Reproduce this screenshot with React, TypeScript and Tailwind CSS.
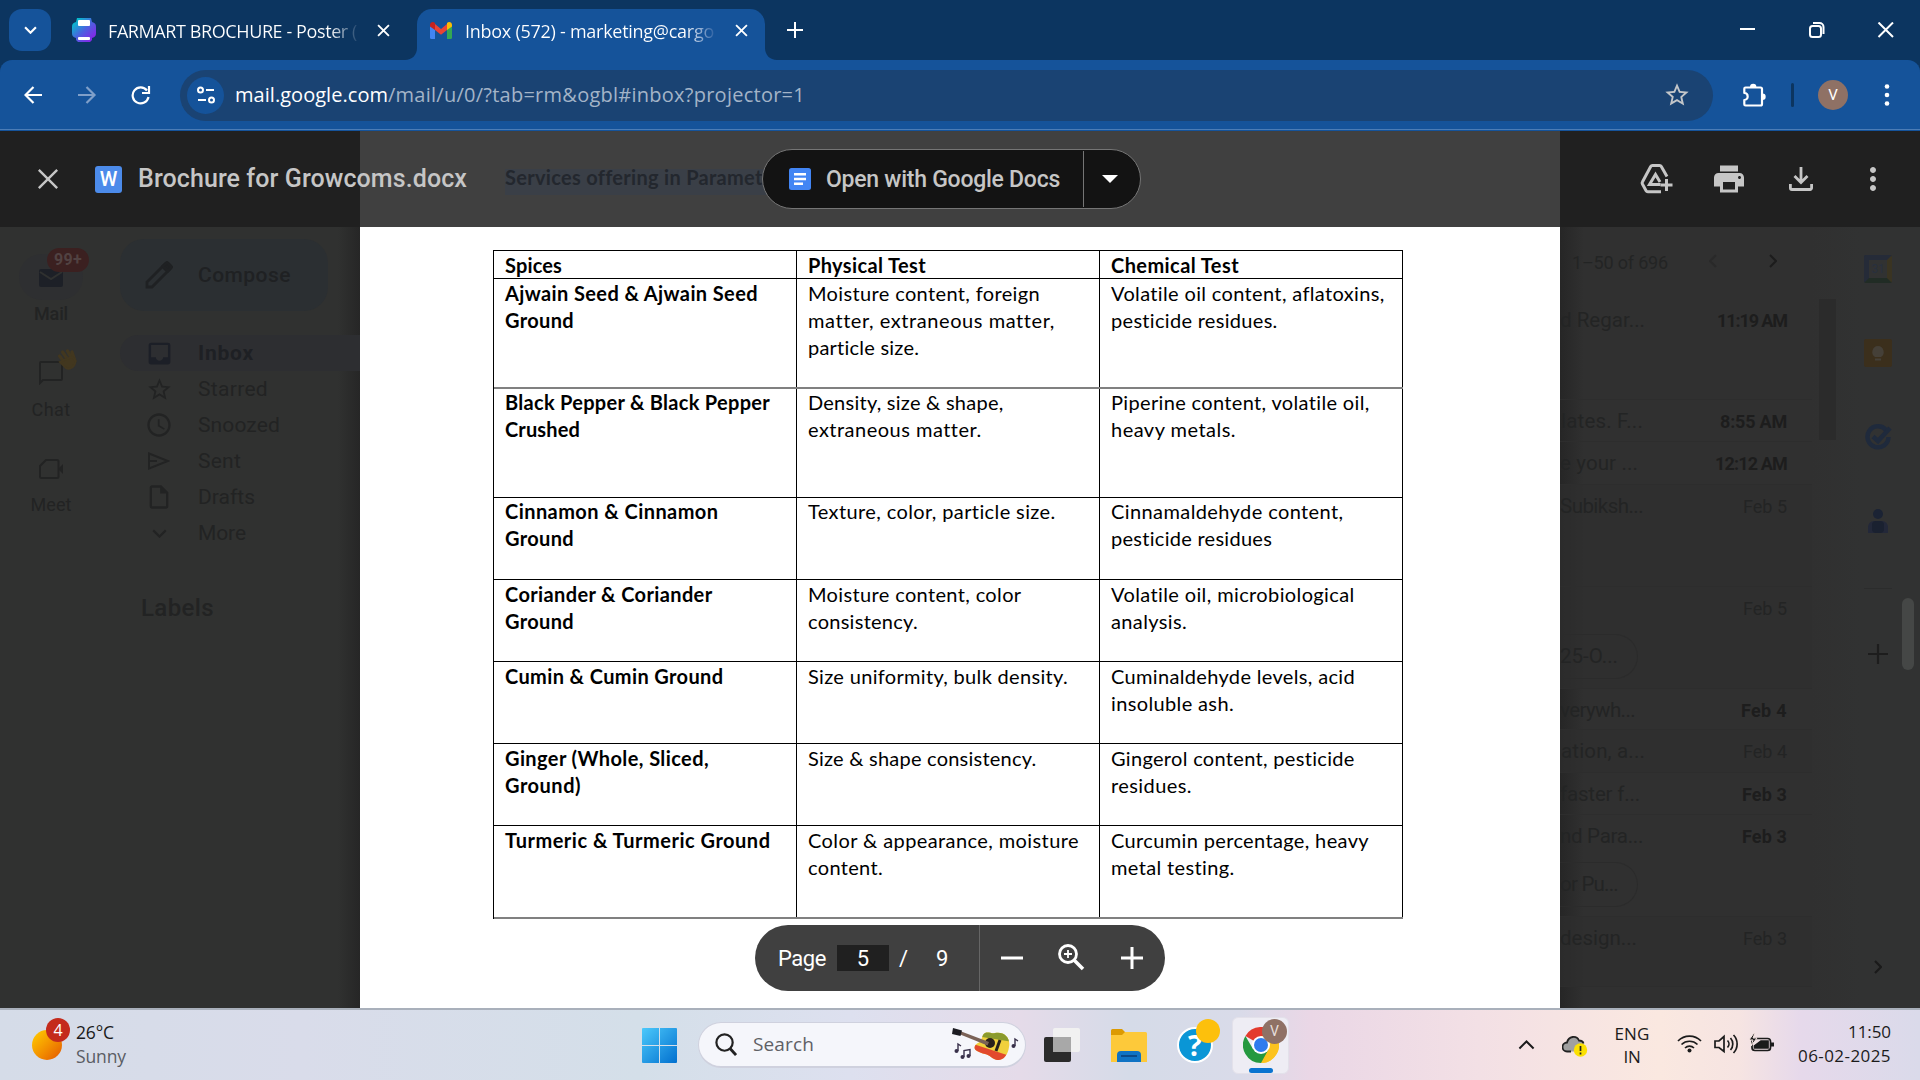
import React, { useLayoutEffect, useRef, useState } from "react";
import {
  MdPrint,
  MdMoreVert,
  MdStarBorder,
  MdInbox,
  MdOutlineInsertDriveFile,
  MdAccessTime,
} from "react-icons/md";

/** One line of text, spaced out or in so that it takes `w` pixels. */
function T({ w, children, className = "" }: { w: number; children: string; className?: string }) {
  const ref = useRef<HTMLSpanElement>(null);
  const [ls, setLs] = useState(0);
  useLayoutEffect(() => {
    const el = ref.current;
    if (el) setLs((w - el.getBoundingClientRect().width) / children.length);
  }, [w, children]);
  return (
    <span ref={ref} className={"inline-block shrink-0 whitespace-pre " + className} style={{ letterSpacing: ls }}>
      {children}
    </span>
  );
}

function Cross({ className }: { className: string }) {
  return (
    <svg viewBox="0 0 12 12" className={className} fill="none" stroke="currentColor">
      <path d="M1 1l10 10M11 1L1 11" />
    </svg>
  );
}

function Chevron({ className, d = "M1 1l5 5 5-5" }: { className: string; d?: string }) {
  return (
    <svg viewBox="0 0 12 7" className={className} fill="none" stroke="currentColor">
      <path d={d} />
    </svg>
  );
}

function TabStrip() {
  return (
    <div className="flex h-[60px] bg-[#0c3560] text-white">
      <div className="ml-[9px] mt-[9px] flex size-[42px] items-center justify-center rounded-[13px] bg-[#15539a]">
        <Chevron className="h-[8px] w-[13px] stroke-[2]" />
      </div>
      <div className="ml-[21px] flex h-[60px] w-[345px] items-center">
        <svg viewBox="0 0 24 24" className="size-6">
          <defs>
            <linearGradient id="pg" x1="0" y1="0.2" x2="0.8" y2="1">
              <stop offset="0" stopColor="#00c4cc" />
              <stop offset="0.5" stopColor="#4b62e0" />
              <stop offset="1" stopColor="#8a22e8" />
            </linearGradient>
          </defs>
          <path d="M5 0h14l1 4c3 1 4 2 4 5v6c0 3-1 4-4 5v2l-2 2H6l-2-2v-2c-3-1-4-2-4-5V9c0-3 1-4 4-5z" fill="url(#pg)" />
          <rect x="6" y="2" width="12" height="6" rx="1" fill="#fff" />
          <rect x="6" y="19" width="12" height="3" rx="1" fill="#fff" />
        </svg>
        <div className="ml-3 mt-[3px] w-[252px] bg-gradient-to-r from-white from-88% to-[#0c3560]/30 bg-clip-text text-[18px] text-transparent">
          <T w={249}>FARMART BROCHURE - Poster (</T>
        </div>
        <Cross className="ml-[17px] size-[13px] stroke-[1.7]" />
      </div>
      <div className="relative mt-[9px] flex w-[348px] items-center rounded-t-[15px] bg-[#15539a] pb-[9px]">
        <svg viewBox="0 0 12 12" className="absolute bottom-0 -left-3 size-3 text-[#15539a]" fill="currentColor">
          <path d="M12 0v12H0C7 12 12 7 12 0z" />
        </svg>
        <svg viewBox="0 0 12 12" className="absolute bottom-0 -right-3 size-3 text-[#15539a]" fill="currentColor">
          <path d="M0 0v12h12C5 12 0 7 0 0z" />
        </svg>
        <svg viewBox="0 0 22 17" className="ml-[13px] h-[17px] w-[22px]">
          <path d="M0 4h5v13H1.500a1.500 1.500 0 0 1-1.500-1.500z" fill="#4285f4" />
          <path d="M17 4h5v11.500a1.500 1.500 0 0 1-1.500 1.500H17z" fill="#34a853" />
          <path d="M5 2l6 5 6-5v6l-6 4.800L5 8z" fill="#ea4335" />
          <path d="M0 3C0 .3 3-.8 5 1v7L0 4.500z" fill="#c5221f" />
          <path d="M22 3c0-2.700-3-3.800-5-2v7l5-3.500z" fill="#fbbc04" />
        </svg>
        <div className="ml-[13px] mt-[3px] w-[252px] bg-gradient-to-r from-white from-88% to-[#15539a] bg-clip-text text-[18px] text-transparent">
          <T w={249}>Inbox (572) - marketing@cargo</T>
        </div>
        <Cross className="ml-[18px] size-[13px] stroke-[1.7]" />
      </div>
      <svg viewBox="0 0 16 16" className="ml-[22px] mt-[22px] size-4 stroke-white stroke-[2]">
        <path d="M8 0v16M0 8h16" />
      </svg>
      <svg viewBox="0 0 154 16" className="mr-[26px] ml-auto mt-[22px] h-4 w-[154px]" fill="none" stroke="white" strokeWidth="2">
        <path d="M0 7h15" />
        <rect x="70" y="4" width="11" height="11" rx="2.500" />
        <path d="M73 1h6.500a4 4 0 0 1 4 4v7" />
        <path d="M138.500.5l14.500 14.500M153 .5L138.500 15" />
      </svg>
    </div>
  );
}

function Toolbar() {
  return (
    <div className="bg-[#0c3560]">
      <div className="flex h-[71px] items-center rounded-t-[12px] border-b border-[#15539a] bg-[#15539a] text-white shadow-[inset_0_-1px_0_#4b7cb6]">
        <svg viewBox="0 0 130 20" className="ml-6 h-5 w-[130px]" fill="none" stroke="currentColor" strokeWidth="2.200">
          <path d="M18 10H2M9.500 2L1.500 10l8 8" />
          <path d="M54 10h16M62.500 2l8 8-8 8" className="text-[#7f9fc9]" stroke="currentColor" />
          <path d="M123 5.500A8 8 0 1 0 124.500 12" />
          <path d="M125 1v7h-7" />
        </svg>
        <div className="ml-[26px] flex h-[51px] w-[1533px] items-center rounded-full bg-[#1a4373]">
          <div className="ml-[7px] flex size-[37px] items-center justify-center rounded-full bg-[#15539a]">
            <svg viewBox="0 0 18 18" className="size-[18px]" fill="none" stroke="white" strokeWidth="2">
              <circle cx="3.500" cy="4" r="2.500" />
              <path d="M9 4h8M1 14h8" />
              <circle cx="14.500" cy="14" r="2.500" />
            </svg>
          </div>
          <div className="ml-[11px] mb-[1px] flex text-[20px]">
            <T w={153}>mail.google.com</T>
            <T w={417} className="text-[#a3b4c8]">/mail/u/0/?tab=rm&ogbl#inbox?projector=1</T>
          </div>
          <MdStarBorder className="mr-[22px] ml-auto size-[28px] text-[#c3c6c9]" />
        </div>
        <svg viewBox="0 0 26 26" className="ml-[28px] size-[26px]" fill="none" stroke="white" strokeWidth="2.200">
          <path d="M4.500 5.500h15a1.500 1.500 0 0 1 1.500 1.500v15a1.500 1.500 0 0 1-1.500 1.500h-15a1.200 1.200 0 0 1-1.200-1.200v-4.300c4.500 0 4.500-7 0-7V6.700a1.200 1.200 0 0 1 1.200-1.200z" strokeLinejoin="round" />
          <path d="M9 5a3.200 3.200 0 0 1 6.400 0M21.500 11.500a3.200 3.200 0 0 1 0 6.400" fill="white" stroke="none" />
        </svg>
        <div className="ml-[24px] h-6 w-[3px] rounded bg-[#0c3560]" />
        <div className="ml-[24px] flex size-[30px] items-center justify-center rounded-full bg-[#8f7165] font-[Roboto] text-[15px]">V</div>
        <svg viewBox="0 0 6 22" className="ml-[36px] h-[22px] w-[6px]" fill="white">
          <circle cx="3" cy="2.500" r="2.300" />
          <circle cx="3" cy="11" r="2.300" />
          <circle cx="3" cy="19.500" r="2.300" />
        </svg>
      </div>
    </div>
  );
}

function ViewerHeader() {
  return (
    <div className="relative flex h-24 items-center bg-[linear-gradient(90deg,#202020_360px,#404040_360px,#404040_1560px,#202020_1560px)] font-[Roboto] text-[#c6c6c6]">
      <div className="absolute top-[38px] left-[505px] h-[26px] w-[270px] bg-[#3a3f47] font-[Lato] text-[20px] leading-[17px] font-bold text-[#23272e]">
        <T w={257}>Services offering in Paramet</T>
      </div>
      <Cross className="ml-[37px] size-[22px] stroke-[1.300]" />
      <div className="ml-[36px] flex size-[27px] items-center justify-center rounded-[3px] bg-[#4c8bea] font-[Roboto] text-[20px] font-medium text-white">W</div>
      <div className="ml-4 text-[25px] font-medium">
        <T w={329}>Brochure for Growcoms.docx</T>
      </div>
      <div className="relative ml-[295px] flex h-[60px] w-[379px] items-center rounded-full border border-[#757575] bg-[#131313]">
        <svg viewBox="0 0 22 22" className="ml-[26px] size-[22px]">
          <rect width="22" height="22" rx="2.500" fill="#4285f4" />
          <path d="M5 6.200h12M5 11h12M5 15.700h9" stroke="white" strokeWidth="2.400" />
        </svg>
        <div className="mt-[2px] ml-[15px] text-[23px] font-medium">
          <T w={234}>Open with Google Docs</T>
        </div>
        <div className="ml-[23px] h-[56px] w-px bg-[#757575]" />
        <svg viewBox="0 0 16 8" className="ml-[18px] h-2 w-4" fill="white">
          <path d="M0 0h16L8 8z" />
        </svg>
      </div>
      <svg viewBox="0 0 34 30" className="ml-[499px] h-[30px] w-[34px]" fill="none" stroke="currentColor" strokeWidth="3">
        <path d="M27 12.500L21.300 2.500a2 2 0 0 0-1.700-1H12.400a2 2 0 0 0-1.700 1L2.400 18a2 2 0 0 0 0 2l3.700 6.700a2 2 0 0 0 1.700 1H21" />
        <path d="M20.500 20.500H9.500L15.500 10.500l4.500 7.500" />
        <path d="M26.500 15v12M20.500 21h12" />
      </svg>
      <MdPrint className="ml-[37px] size-[36px]" />
      <svg viewBox="0 0 24 24" className="ml-[42px] size-[24px]" fill="none" stroke="currentColor" strokeWidth="2.800">
        <path d="M12 0v15M5.500 9l6.500 6.500L18.500 9M1.400 17v4a1.500 1.500 0 0 0 1.500 1.500h18.200a1.500 1.500 0 0 0 1.500-1.500v-4" />
      </svg>
      <MdMoreVert className="ml-[42px] size-[36px]" />
    </div>
  );
}

const NAV: [string, number, React.ReactNode][] = [
  ["Inbox", 56, <MdInbox className="size-[29px] text-[#1c1f27]" />],
  ["Starred", 70, <MdStarBorder className="size-[27px]" />],
  ["Snoozed", 82, <MdAccessTime className="size-[28px]" />],
  [
    "Sent",
    43,
    <svg viewBox="0 0 22 18" className="h-[18px] w-[22px]" fill="none" stroke="currentColor" strokeWidth="2">
      <path d="M1 1.500L20 9 1 16.500zM1 9h8" />
    </svg>,
  ],
  ["Drafts", 57, <MdOutlineInsertDriveFile className="size-[28px]" />],
  ["More", 48, <Chevron className="h-[9px] w-[15px] stroke-[1.700]" />],
];

function LeftPane() {
  return (
    <div className="flex w-[360px] bg-[linear-gradient(90deg,#303130_338px,#262626_360px)] font-[Roboto] text-[#222323]">
      <div className="flex w-[102px] flex-col items-center text-[18px]">
        <div className="relative mt-[27px] flex h-[46px] w-[64px] items-center justify-center rounded-full bg-[#2e2f31]">
          <svg viewBox="0 0 24 18" className="mt-[2px] h-[18px] w-6" fill="#1d2027">
            <rect width="24" height="18" rx="2" />
            <path d="M1 3l11 7L23 3" stroke="#303130" strokeWidth="2" fill="none" />
          </svg>
          <div className="absolute -top-[6px] left-[28px] flex h-6 w-[42px] items-center justify-center rounded-full bg-[#3b2020] text-[16px] font-bold text-[#514242]">
            <T w={28}>99+</T>
          </div>
        </div>
        <T w={34} className="font-medium">Mail</T>
        <div className="relative mt-[31px] h-[28px] w-6">
          <svg viewBox="0 0 24 24" className="mt-[3px] size-6" fill="none" stroke="currentColor" strokeWidth="2">
            <path d="M1 22V2a1 1 0 0 1 1-1h20a1 1 0 0 1 1 1v16a1 1 0 0 1-1 1H4z" />
          </svg>
          <svg viewBox="0 0 22 24" className="absolute -top-[10px] left-[18px] h-6 w-[22px]" fill="none" stroke="#42371f" strokeWidth="3.200" strokeLinecap="round">
            <path d="M2.500 8l7 9M5.500 4l7 10M10.500 3l5 9M15 4l3 9" />
            <path d="M3 14l6 6c4 2 9-1 9.500-7L15 9 7 12z" fill="#42371f" strokeWidth="2" />
          </svg>
        </div>
        <T w={39} className="mt-[10px]">Chat</T>
        <svg viewBox="0 0 24 20" className="mt-[36px] h-5 w-6" fill="none" stroke="currentColor" strokeWidth="2">
          <path d="M7 1h11a1.500 1.500 0 0 1 1.500 1.500v15a1.500 1.500 0 0 1-1.500 1.500H2.500A1.500 1.500 0 0 1 1 17.500V7z" />
          <path d="M19 10l5-5v10z" fill="currentColor" stroke="none" />
        </svg>
        <T w={41} className="mt-[12px]">Meet</T>
      </div>
      <div className="flex w-[258px] flex-col pl-[18px]">
        <div className="mt-3 flex h-[72px] w-[208px] items-center rounded-[24px] bg-[#2b2f32] text-[#1f2123]">
          <svg viewBox="0 0 28 28" className="ml-[25px] size-7" fill="none" stroke="currentColor" strokeWidth="2.800">
            <path d="M2 26v-5L20.500 2.500c.8-.8 2-.8 2.800 0l2.200 2.200c.8.800.8 2 0 2.800L7 26zM17.500 5.500l5 5" />
            <path d="M18 5l4-3.500 4.500 4.500L23 10z" fill="currentColor" />
          </svg>
          <T w={93} className="mt-[2px] ml-[25px] text-[21px] font-medium">Compose</T>
        </div>
        <div className="mt-6 text-[21px]">
          {NAV.map(([label, w, icon], i) => (
            <div key={label} className={"flex h-9 items-center " + (i === 0 ? "rounded-l-full bg-[#2d2e31] font-bold text-[#1e2024]" : "")}>
              <div className="ml-[22px] flex w-[34px] justify-center">{icon}</div>
              <T w={w} className="mt-[2px] ml-[22px]">{label}</T>
            </div>
          ))}
        </div>
        <T w={73} className="mt-[39px] ml-[21px] self-start text-[24px] font-medium">Labels</T>
      </div>
    </div>
  );
}

type Mail = { h: number; text: string; tw: number; end: number; date: string; dw: number; bold?: boolean; pill?: string; pw?: number };

const MAILS: Mail[] = [
  { h: 101, text: "d Regar...", tw: 85, end: 1645, date: "11:19 AM", dw: 70, bold: true },
  { h: 42, text: "lates. F...", tw: 82, end: 1643, date: "8:55 AM", dw: 67, bold: true },
  { h: 43, text: "e your ...", tw: 78, end: 1638, date: "12:12 AM", dw: 72, bold: true },
  { h: 102, text: "Subiksh...", tw: 83, end: 1643, date: "Feb 5", dw: 44 },
  { h: 102, text: "", tw: 0, end: 1640, date: "Feb 5", dw: 44, pill: "25-O...", pw: 58 },
  { h: 41, text: "verywh...", tw: 75, end: 1635, date: "Feb 4", dw: 46, bold: true },
  { h: 43, text: "ation, a...", tw: 84, end: 1645, date: "Feb 4", dw: 44 },
  { h: 42, text: "faster f...", tw: 80, end: 1640, date: "Feb 3", dw: 45, bold: true },
  { h: 102, text: "nd Para...", tw: 83, end: 1643, date: "Feb 3", dw: 45, bold: true, pill: "or Pu...", pw: 58 },
  { h: 70, text: "design...", tw: 77, end: 1637, date: "Feb 3", dw: 44 },
];

function RightPane() {
  return (
    <div className="flex w-[360px] bg-[linear-gradient(90deg,#262626_0px,#303030_24px,#303030_250px,#313232_300px)] font-[Roboto] text-[#232424]">
      <div className="w-[252px]">
        <div className="flex h-[72px] items-center pb-[1px]">
          <T w={96} className="ml-3 text-[18px]">1–50 of 696</T>
          <svg viewBox="0 0 8 14" className="mt-[-3px] ml-[41px] h-[14px] w-2" fill="none" stroke="#292929" strokeWidth="2">
            <path d="M7 1L1 7l6 6" />
          </svg>
          <svg viewBox="0 0 8 14" className="mt-[-3px] ml-[52px] h-[14px] w-2" fill="none" stroke="#1c1c1c" strokeWidth="2">
            <path d="M1 1l6 6-6 6" />
          </svg>
        </div>
        {MAILS.map((m, i) => (
          <div key={i} className={"border-b border-[#2d2d2d] " + (m.bold ? "" : "bg-[#2f2f2f]/60")} style={{ height: m.h }}>
            <div className="flex h-[42px] items-center justify-between pr-[25px]">
              <div className="flex justify-end text-[20.500px]" style={{ width: m.end - 1560 }}>
                {m.text && <T w={m.tw}>{m.text}</T>}
              </div>
              <T w={m.dw} className={"text-[18px] " + (m.bold ? "font-bold text-[#1d1d1d]" : "")}>{m.date}</T>
            </div>
            {m.pill && (
              <div className="mt-[5px] flex h-[45px] w-[78px] items-center justify-end rounded-r-full border border-l-0 border-[#2b2b2b] pr-[19px] text-[20.500px]">
                <T w={m.pw || 58}>{m.pill}</T>
              </div>
            )}
          </div>
        ))}
      </div>
      <div className="mt-[72px] ml-[7px] h-[141px] w-[17px] bg-[#2b2b2b]" />
      <div className="ml-[27px] flex w-[30px] flex-col items-center">
        <div className="mt-[28px] flex size-7 items-center justify-center rounded-[2px] border-[5px] border-t-[#252b38] border-r-[#3a3422] border-b-[#212c25] border-l-[#252b38] text-[12px] leading-none text-[#28303e]">
          <T w={13}>31</T>
        </div>
        <svg viewBox="0 0 28 28" className="mt-14 size-7">
          <rect width="28" height="28" rx="2" fill="#3b2f1c" />
          <path d="M14 7a6 6 0 0 0-3 11h6a6 6 0 0 0-3-11zM11 19.500h6v2h-6z" fill="#454038" />
        </svg>
        <svg viewBox="0 0 28 28" className="mt-14 size-7" fill="none" stroke="#1f2a3c" strokeWidth="4.500">
          <path d="M22 7a10.500 10.500 0 1 0 2.500 7" />
          <path d="M9 13.500l5 4.500L26 5" />
        </svg>
        <svg viewBox="0 0 28 28" className="mt-14 size-7">
          <circle cx="14" cy="7" r="5" fill="#1b2334" />
          <path d="M4 26v-6a6 6 0 0 1 6-6h8a6 6 0 0 1 6 6v6z" fill="#232839" />
          <rect x="8" y="14" width="12" height="12" rx="4" fill="#1a2130" />
        </svg>
        <div className="mt-[53px] h-px w-7 bg-[#2b2c2c]" />
        <svg viewBox="0 0 20 20" className="mt-[55px] size-5 stroke-[#1d1d1d] stroke-[2.200]">
          <path d="M10 0v20M0 10h20" />
        </svg>
        <svg viewBox="0 0 8 14" className="mt-[296px] h-[14px] w-2" fill="none" stroke="#1a1a1a" strokeWidth="2.200">
          <path d="M1 1l6 6-6 6" />
        </svg>
      </div>
      <div className="mt-[371px] ml-[9px] h-[72px] w-3 rounded-full bg-[#454746]" />
    </div>
  );
}

type Cell = [string, number][];
type Row = { cls: string; cells: [Cell, Cell, Cell]; head?: boolean };

const ROWS: Row[] = [
  { cls: "h-[28px] border-b border-black", head: true, cells: [[["Spices", 57]], [["Physical Test", 118]], [["Chemical Test", 128]]] },
  {
    cls: "h-[110px] border-b-2 border-b-[#808080]",
    cells: [
      [["Ajwain Seed & Ajwain Seed", 253], ["Ground", 69]],
      [["Moisture content, foreign", 232], ["matter, extraneous matter,", 245.5], ["particle size.", 111.5]],
      [["Volatile oil content, aflatoxins,", 274], ["pesticide residues.", 167]],
    ],
  },
  {
    cls: "h-[109px] border-b border-black",
    cells: [
      [["Black Pepper & Black Pepper", 265], ["Crushed", 75]],
      [["Density, size & shape,", 195.5], ["extraneous matter.", 173]],
      [["Piperine content, volatile oil,", 259], ["heavy metals.", 125]],
    ],
  },
  {
    cls: "h-[82px] border-b border-black",
    cells: [
      [["Cinnamon & Cinnamon", 213.5], ["Ground", 69]],
      [["Texture, color, particle size.", 248]],
      [["Cinnamaldehyde content,", 232.5], ["pesticide residues", 161.5]],
    ],
  },
  {
    cls: "h-[82px] border-b border-black",
    cells: [
      [["Coriander & Coriander", 207.5], ["Ground", 69]],
      [["Moisture content, color", 213.5], ["consistency.", 110]],
      [["Volatile oil, microbiological", 244], ["analysis.", 76]],
    ],
  },
  {
    cls: "h-[82px] border-b border-black",
    cells: [
      [["Cumin & Cumin Ground", 218.5]],
      [["Size uniformity, bulk density.", 260]],
      [["Cuminaldehyde levels, acid", 244], ["insoluble ash.", 123]],
    ],
  },
  {
    cls: "h-[82px] border-b border-black",
    cells: [
      [["Ginger (Whole, Sliced,", 204], ["Ground)", 76]],
      [["Size & shape consistency.", 228.5]],
      [["Gingerol content, pesticide", 244], ["residues.", 81]],
    ],
  },
  {
    cls: "h-[93px] border-b-2 border-b-[#808080]",
    cells: [
      [["Turmeric & Turmeric Ground", 265.5]],
      [["Color & appearance, moisture", 271], ["content.", 75]],
      [["Curcumin percentage, heavy", 258], ["metal testing.", 124]],
    ],
  },
];

function DocPage() {
  return (
    <div className="relative w-[1200px] bg-white font-[Lato] text-[20px] leading-[27px] text-black">
      <div className="mt-[23px] ml-[133px] w-[910px] border-t border-l border-black">
        {ROWS.map((r, i) => (
          <div key={i} className={"grid grid-cols-[303px_303px_303px] " + r.cls}>
            {r.cells.map((c, j) => (
              <div
                key={j}
                className={
                  "flex flex-col items-start border-r border-black pl-[11px]" +
                  (i === 2 || i === 3 ? "" : " pt-px") +
                  (r.head || j === 0 ? " font-bold" : "")
                }
              >
                {c.map(([t, w]) => (
                  <T key={t} w={w}>{t}</T>
                ))}
              </div>
            ))}
          </div>
        ))}
      </div>
      <div className="absolute top-[698px] left-[395px] flex h-[66px] w-[410px] items-center rounded-full bg-[#404040] font-[Roboto] text-[22px] text-white">
        <T w={48} className="ml-[23px]">Page</T>
        <div className="ml-[11px] flex h-[26px] w-[52px] items-center justify-center bg-[#202020]">5</div>
        <div className="ml-[10px]">/</div>
        <div className="ml-[28px]">9</div>
        <div className="ml-auto h-full w-px bg-[#666]" />
        <svg viewBox="0 0 144 28" className="mr-[20px] ml-[21px] h-7 w-[144px]" fill="none" stroke="white" strokeWidth="3">
          <path d="M0 14h22M120 14h22M131 3v22" />
          <circle cx="67" cy="10" r="8.500" strokeWidth="2.800" />
          <path d="M73 16l9 9" strokeWidth="3.600" />
          <path d="M67 6v8M63 10h8" strokeWidth="1.800" />
        </svg>
      </div>
    </div>
  );
}

function Guitar() {
  return (
    <svg viewBox="0 0 68 36" className="mt-[2px] h-9 w-[68px]">
      <defs>
        <clipPath id="gb">
          <path d="M31 7c3-5 8-1 12-2 9-2 16 5 14 14-1 8-6 14-12 13-5-1-7-5-12-6-7-2-12-4-10-8 1-3 5-3 6-6z" />
        </clipPath>
      </defs>
      <g clipPath="url(#gb)">
        <path d="M20 0h45v36H20z" fill="#f0d03c" />
        <path d="M28 0h40v15L30 9z" fill="#8a9a2e" />
        <path d="M18 15l37 12-6 9H18z" fill="#e2492d" />
        <path d="M48 12l-4 11" stroke="#26201c" strokeWidth="3" />
      </g>
      <circle cx="38" cy="15" r="5" fill="#2a221c" />
      <path d="M8 3l29 11-1.500 3.500L7 6z" fill="#7a6257" />
      <path d="M1 0l9 2.500L8.500 8 0 6z" fill="#1c1c22" />
      <path d="M6 23v-7l3 2M12 29v-6.500l6-1V28" stroke="#38304a" strokeWidth="1.400" fill="none" />
      <path d="M63 18v-7l3 2" stroke="#38304a" strokeWidth="1.400" fill="none" />
      <g fill="#38304a">
        <circle cx="4.500" cy="23" r="2" />
        <circle cx="10.500" cy="29" r="2" />
        <circle cx="16.500" cy="28" r="2" />
        <circle cx="61.500" cy="18" r="2" />
      </g>
    </svg>
  );
}

function Taskbar() {
  return (
    <div className="flex h-[72px] items-center border-t-2 border-[#a9b0bb] bg-[linear-gradient(90deg,#d5dce8_0px,#d9dcea_300px,#d4dfe9_640px,#dde0ef_850px,#e5dbe9_1020px,#d5dbe8_1130px,#d9dbe9_1240px,#ead7e6_1310px,#f3e0e5_1480px,#fae8e0_1660px,#f6e4e2_1740px,#e6d9eb_1800px,#dadaea_1920px)] text-[#1b1b1b]">
      <div className="relative ml-8 size-[30px] rounded-full bg-gradient-to-br from-[#ffd000] to-[#e25400]">
        <div className="absolute -top-[12px] left-[14px] flex size-6 items-center justify-center rounded-full bg-[#c42b1c] text-[16px] text-white">4</div>
      </div>
      <div className="mb-[2px] ml-[14px] flex w-[52px] flex-col items-start text-[17.500px] leading-6">
        <T w={38}>26°C</T>
        <T w={50} className="text-[#5a5d63]">Sunny</T>
      </div>
      <svg viewBox="0 0 35 35" className="ml-[514px] size-[35px]">
        <defs>
          <linearGradient id="wl" x1="0" y1="0" x2="1" y2="1">
            <stop offset="0" stopColor="#4cc9fb" />
            <stop offset="1" stopColor="#0270cf" />
          </linearGradient>
        </defs>
        <path d="M1 0h16v17H0V1a1 1 0 0 1 1-1zM18 0h16a1 1 0 0 1 1 1v16H18zM0 18h17v17H1a1 1 0 0 1-1-1zM18 18h17v16a1 1 0 0 1-1 1H18z" fill="url(#wl)" />
      </svg>
      <div className="ml-[21px] flex h-[46px] w-[328px] items-center rounded-full border border-b-2 border-[#cfd1de] bg-[#f5f6fb]">
        <svg viewBox="0 0 24 24" className="ml-[15px] size-[23px]" fill="none" stroke="#222" strokeWidth="2.300">
          <circle cx="11" cy="10" r="8.500" />
          <path d="M16.500 16l6.500 7" strokeWidth="3" />
        </svg>
        <T w={61} className="ml-[16px] text-[19px] text-[#5f6065]">Search</T>
        <div className="ml-auto pr-[5px]">
          <Guitar />
        </div>
      </div>
      <svg viewBox="0 0 36 34" className="ml-[18px] h-[34px] w-9">
        <rect y="9" width="27" height="25" rx="2" fill="#2b2b2b" />
        <rect x="9" width="27" height="24" rx="2" fill="#f1f1f1" />
        <path d="M9 9h18v15H9z" fill="#a8a8a8" />
      </svg>
      <svg viewBox="0 0 36 33" className="ml-[31px] h-[33px] w-9">
        <path d="M0 1.500A1.500 1.500 0 0 1 1.500 0H11l4 4-3 4H0z" fill="#dc9a02" />
        <path d="M0 6h11l3-3h20.500A1.500 1.500 0 0 1 36 4.500V33H0z" fill="#fdc93a" />
        <path d="M6 33v-7a4 4 0 0 1 4-4h16a4 4 0 0 1 4 4v7z" fill="#0f73c4" />
        <path d="M10 27h16" stroke="#0a4a8a" strokeWidth="2" />
      </svg>
      <div className="relative ml-[30px] flex size-[36px] items-center justify-center rounded-full border-2 border-white bg-[#0a96d6] text-[29px] font-bold text-white">
        ?
        <div className="absolute -top-[10px] left-[17px] size-6 rounded-full bg-[#fdc00c]" />
      </div>
      <div className="relative ml-[19px] flex size-[57px] items-center justify-center rounded-[6px] border border-[#e3e1ea] bg-[#eeedf4]">
        <svg viewBox="0 0 36 36" className="size-9">
          <path d="M18 18L2.400 9a18 18 0 0 1 31.200 0z" fill="#e33b2e" />
          <path d="M18 18l15.600-9A18 18 0 0 1 18 36z" fill="#fcc31e" />
          <path d="M2.400 9A18 18 0 0 0 18 36l7.500-13.500L10 22z" fill="#25993f" />
          <path d="M18 9h15.600a18 18 0 0 1-14.400 27L26 22z" fill="#fcc31e" />
          <circle cx="18" cy="18" r="9" fill="white" />
          <circle cx="18" cy="18" r="7" fill="#2f7bee" />
        </svg>
        <div className="absolute top-[1px] left-[29px] flex size-[25px] items-center justify-center rounded-full bg-[#8f7165] font-[Roboto] text-[14px] text-[#e6dedb]">V</div>
        <div className="absolute bottom-0 h-[5px] w-6 rounded-full bg-[#0a74d0]" />
      </div>
      <Chevron d="M1 6l5-5 5 5" className="ml-[229px] h-[10px] w-[17px] stroke-[1.400]" />
      <svg viewBox="0 0 26 22" className="mt-[2px] ml-[27px] h-[22px] w-[26px]">
        <path d="M5 16.500a4.500 4.500 0 0 1 0-9C6.500 1 14.500 0 17 5.500c4 0 5 3 5 6v5z" fill="#a0a0a0" />
        <path d="M9 16.500H5a4.500 4.500 0 0 1 0-9C6.500 1 14.500 0 17 5.500c2.500 0 4 1 4.500 3" fill="none" stroke="#222" strokeWidth="1.800" />
        <circle cx="18.500" cy="15" r="6.700" fill="#fbe002" />
        <path d="M18.500 11v5M18.500 17.500v2" stroke="#222" strokeWidth="1.700" />
      </svg>
      <div className="ml-[24px] flex w-[40px] flex-col items-center text-[17px] leading-[23px]">
        <T w={35}>ENG</T>
        <T w={17}>IN</T>
      </div>
      <svg viewBox="0 0 98 24" className="mb-[2px] ml-[25px] h-6 w-[98px]" fill="none" stroke="#1b1b1b" strokeWidth="1.700">
        <path d="M1 9a16 16 0 0 1 23 0M4.500 12.500a11.500 11.500 0 0 1 16 0M8 16a6.500 6.500 0 0 1 9 0" />
        <circle cx="12.500" cy="18.500" r="2" fill="#1b1b1b" stroke="none" />
        <path d="M38 9h4l5-4.500v15L42 15.500h-4zM50.500 8.500a5 5 0 0 1 0 7M53.500 6a9 9 0 0 1 0 12M56.500 3a13 13 0 0 1 0 18" />
        <rect x="75" y="6.500" width="18.500" height="12" rx="3" />
        <path d="M84 9h7v7H77.500v-2z" fill="#1b1b1b" />
        <path d="M95.500 10.500v4" strokeWidth="3" />
        <path d="M77 1l-5 7h4l-2 6 6-8h-4l2-5z" fill="#1b1b1b" stroke="#f6e4e2" strokeWidth="1" />
      </svg>
      <div className="mr-[29px] mb-[3px] ml-auto flex flex-col items-end text-[17px] leading-6">
        <T w={43}>11:50</T>
        <T w={93}>06-02-2025</T>
      </div>
    </div>
  );
}

export default function App() {
  return (
    <div className="flex h-[1080px] w-[1920px] flex-col overflow-hidden font-['Open_Sans',sans-serif]">
      <TabStrip />
      <Toolbar />
      <ViewerHeader />
      <div className="flex h-[781px] overflow-hidden">
        <LeftPane />
        <DocPage />
        <RightPane />
      </div>
      <Taskbar />
    </div>
  );
}
